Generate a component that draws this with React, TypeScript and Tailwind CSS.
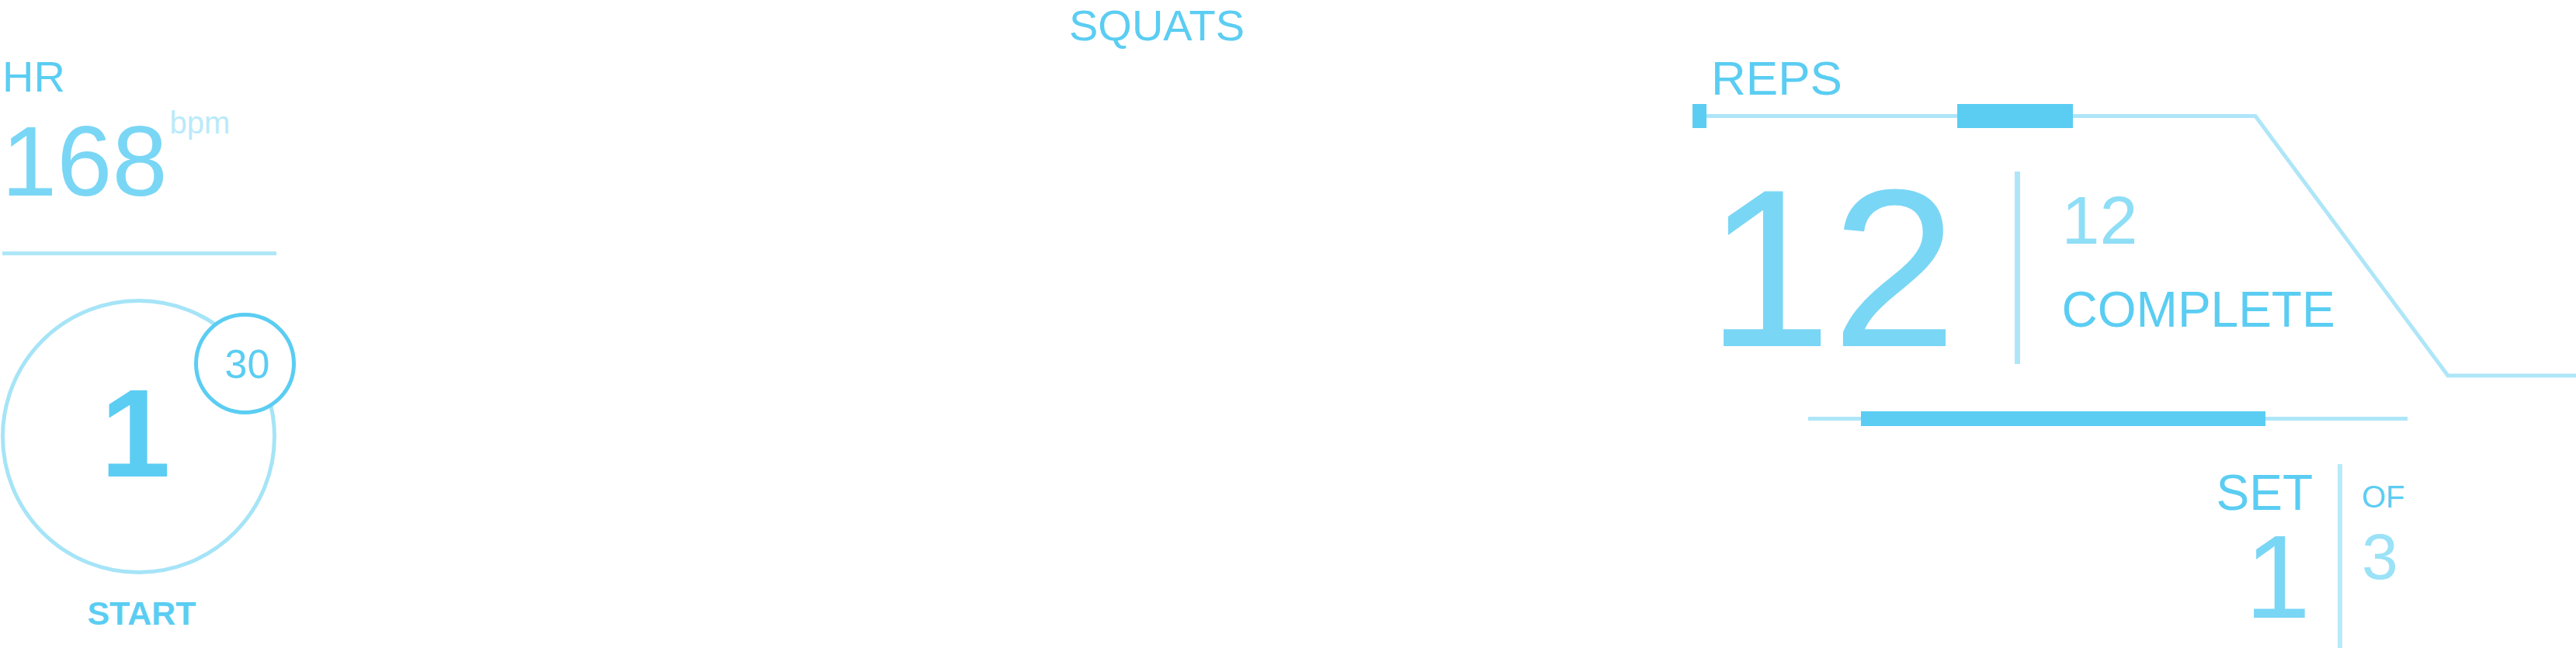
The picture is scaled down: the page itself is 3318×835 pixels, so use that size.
import React from 'react';

const App: React.FC = () => {
  return (
    <div className="flex h-[835px] w-[3318px] overflow-hidden bg-white text-[#5bcdf2] [font-family:'Liberation_Sans',Arial,sans-serif]">
      {/* heart rate + countdown */}
      <div className="flex w-[381px] shrink-0 flex-col">
        <span className="ml-[3px] mt-[71px] text-[56px] leading-none">HR</span>
        <div className="mt-[11px] flex items-start">
          <span className="ml-[2px] mt-[6px] text-[128px] leading-none text-[#7ad6f5]">168</span>
          <span className="ml-[3px] text-[40px] leading-none text-[#b9eafa]">bpm</span>
        </div>
        <div className="ml-[3px] mt-[52px] h-[5px] w-[353px] bg-[#aee6f8]" />

        <div className="relative ml-[1px] mt-[56px] h-[355px] w-[355px]">
          <div className="flex h-full w-full items-center justify-center rounded-full border-[5px] border-[#a6e4f7]">
            <span className="-mt-[10px] mr-[8px] text-[162px] font-bold leading-none">1</span>
          </div>
          <div className="absolute left-[249px] top-[18px] flex h-[131px] w-[131px] items-center justify-center rounded-full border-[5px] border-[#5bcdf2] bg-white">
            <span className="ml-[6px] text-[52px] leading-none">30</span>
          </div>
        </div>
        <span className="ml-[1px] mt-[29px] w-[355px] pl-[8px] text-center text-[43px] font-bold leading-none">START</span>
      </div>

      {/* exercise title */}
      <div className="flex-1 pl-[996px] pt-[5px]">
        <span className="text-[56px] leading-none">SQUATS</span>
      </div>

      {/* reps + sets */}
      <div className="relative flex w-[1138px] shrink-0 flex-col">
        <svg className="pointer-events-none absolute left-0 top-0" width="1138" height="835" viewBox="0 0 1138 835" fill="none">
          <polyline points="715,149.5 725,149.5 973,484 1145,484" stroke="#aee6f8" strokeWidth="5" />
        </svg>

        <span className="ml-[24px] mt-[70px] text-[62px] leading-none">REPS</span>
        <div className="mt-[2px] flex h-[31px] w-[725px] items-center">
          <div className="h-full w-[18px] bg-[#5bcdf2]" />
          <div className="h-[5px] w-[323px] bg-[#aee6f8]" />
          <div className="h-full w-[149px] bg-[#5bcdf2]" />
          <div className="h-[5px] flex-1 bg-[#aee6f8]" />
        </div>

        <div className="mt-[35px] flex items-start">
          <span className="ml-[18px] text-[290px] leading-none text-[#7ad6f5]">12</span>
          <div className="ml-[74px] mt-[21px] h-[248px] w-[7px] bg-[#aee6f8]" />
          <div className="ml-[54px] flex flex-col">
            <span className="mt-[40px] text-[88px] leading-none text-[#8edef6]">12</span>
            <span className="mt-[39px] text-[64px] leading-none">COMPLETE</span>
          </div>
        </div>

        <div className="ml-[149px] mt-[40px] flex h-[19px] w-[772px] items-center">
          <div className="h-[5px] w-[68px] bg-[#aee6f8]" />
          <div className="h-full w-[521px] bg-[#5bcdf2]" />
          <div className="h-[5px] flex-1 bg-[#aee6f8]" />
        </div>

        <div className="ml-[675px] mt-[49px] flex flex-1">
          <div className="flex w-[124px] flex-col items-end">
            <span className="mt-[5px] text-[64px] leading-none">SET</span>
            <span className="mr-[3px] text-[152px] leading-none text-[#7ad6f5]">1</span>
          </div>
          <div className="ml-[32px] w-[6px] bg-[#b8eaf9]" />
          <div className="ml-[25px] flex flex-col">
            <span className="mt-[22px] text-[40px] leading-none">OF</span>
            <span className="mt-[15px] text-[84px] leading-none text-[#9be2f7]">3</span>
          </div>
        </div>
      </div>
    </div>
  );
};

export default App;
